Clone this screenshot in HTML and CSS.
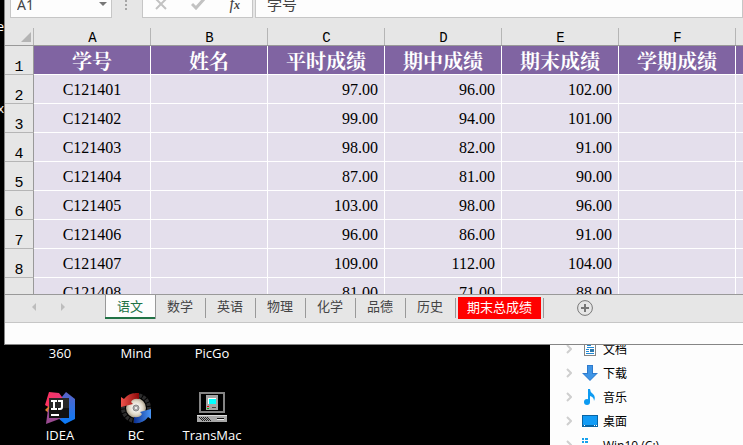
FILE: index.html
```html
<!DOCTYPE html>
<html lang="zh-CN">
<head>
<meta charset="utf-8">
<title>成绩表</title>
<link rel="stylesheet" href="styles.css">
</head>
<body>
<div class="upper">
  <div class="edge"><span>e</span><span>x</span></div>
  <main class="excel">
    <div class="formula-bar">
      <div class="box name-box">
        <input type="text" value="A1" aria-label="名称框">
        <button type="button" aria-label="展开"><svg width="8" height="4" viewBox="0 0 8 4"><path d="M0 0h8L4 4z" fill="#777"/></svg></button>
      </div>
      <svg class="dots" width="2" height="14" viewBox="0 0 2 14" fill="#a6a6a6"><path d="M0 0h2v2H0zM0 4h2v2H0zM0 8h2v2H0zM0 12h2v2H0z"/></svg>
      <div class="box tools">
        <button type="button" aria-label="取消"><svg width="12" height="12" viewBox="0 0 12 12"><path d="M1 1l10 10M11 1L1 11" stroke="#c2c2c2" stroke-width="2" fill="none"/></svg></button>
        <button type="button" aria-label="输入"><svg width="14" height="12" viewBox="0 0 14 12"><path d="M1 6l4 4 8-9" stroke="#c2c2c2" stroke-width="3" fill="none"/></svg></button>
        <button type="button" class="fx"><i>f</i><i class="sub">x</i></button>
      </div>
      <input class="box formula" type="text" value="学号" aria-label="编辑栏">
    </div>
    <div class="sheet">
      <table>
        <colgroup><col class="num"><col><col><col><col><col><col><col></colgroup>
        <thead>
          <tr><td class="corner"><svg width="10" height="10" viewBox="0 0 10 10"><path d="M10 0v10H0z" fill="#b4b4b4"/></svg></td><th>A</th><th>B</th><th>C</th><th>D</th><th>E</th><th>F</th><th></th></tr>
        </thead>
        <tbody>
          <tr class="titles"><th>1</th><td>学号</td><td>姓名</td><td>平时成绩</td><td>期中成绩</td><td>期末成绩</td><td>学期成绩</td><td></td></tr>
          <tr><th>2</th><td>C121401</td><td></td><td>97.00</td><td>96.00</td><td>102.00</td><td></td><td></td></tr>
          <tr><th>3</th><td>C121402</td><td></td><td>99.00</td><td>94.00</td><td>101.00</td><td></td><td></td></tr>
          <tr><th>4</th><td>C121403</td><td></td><td>98.00</td><td>82.00</td><td>91.00</td><td></td><td></td></tr>
          <tr><th>5</th><td>C121404</td><td></td><td>87.00</td><td>81.00</td><td>90.00</td><td></td><td></td></tr>
          <tr><th>6</th><td>C121405</td><td></td><td>103.00</td><td>98.00</td><td>96.00</td><td></td><td></td></tr>
          <tr><th>7</th><td>C121406</td><td></td><td>96.00</td><td>86.00</td><td>91.00</td><td></td><td></td></tr>
          <tr><th>8</th><td>C121407</td><td></td><td>109.00</td><td>112.00</td><td>104.00</td><td></td><td></td></tr>
          <tr><th></th><td>C121408</td><td></td><td>81.00</td><td>71.00</td><td>88.00</td><td></td><td></td></tr>
        </tbody>
      </table>
    </div>
    <nav class="tabs">
      <div class="arrows">
        <button type="button" aria-label="上一张"><svg width="4" height="8" viewBox="0 0 4 8"><path d="M4 0v8L0 4z" fill="#bdbdbd"/></svg></button>
        <button type="button" aria-label="下一张"><svg width="4" height="8" viewBox="0 0 4 8"><path d="M0 0v8l4-4z" fill="#bdbdbd"/></svg></button>
      </div>
      <button type="button" class="tab active">语文</button>
      <button type="button" class="tab">数学</button>
      <button type="button" class="tab">英语</button>
      <button type="button" class="tab">物理</button>
      <button type="button" class="tab">化学</button>
      <button type="button" class="tab">品德</button>
      <button type="button" class="tab">历史</button>
      <button type="button" class="tab total"><span>期末总成绩</span></button>
      <button type="button" class="add" aria-label="新工作表"><svg width="16" height="16" viewBox="0 0 16 16" fill="none" stroke="#777"><circle cx="8" cy="8" r="7.4"/><path d="M8 4v8M4 8h8" stroke-width="2"/></svg></button>
    </nav>
    <div class="status"></div>
  </main>
</div>
<div class="lower">
  <div class="desktop">
    <a class="shortcut" href="#">360</a>
    <a class="shortcut" href="#">Mind</a>
    <a class="shortcut" href="#">PicGo</a>
    <a class="shortcut" href="#">
      <svg width="32" height="32" viewBox="0 0 32 32">
        <defs>
          <linearGradient id="ij1" x1="0" y1="0" x2="0" y2="1"><stop offset="0" stop-color="#5b62c4"/><stop offset="1" stop-color="#087cfa"/></linearGradient>
          <linearGradient id="ij2" x1="0" y1="0" x2="1" y2="0"><stop offset="0" stop-color="#fe315d"/><stop offset="1" stop-color="#e33b7e"/></linearGradient>
        </defs>
        <path d="M17 6l5-6 9 7v20l-10 5-7-6z" fill="url(#ij1)"/>
        <path d="M1 13L5 0l10 1 6 8-10 10z" fill="url(#ij2)"/>
        <path d="M1 18l6-6v11z" fill="#e0822f"/>
        <path d="M4 17l14 9-16 6z" fill="#9a4b91"/>
        <path d="M5 6h20v20H5z" fill="#111"/>
        <path d="M5 6h20v10H5z" fill="#272727"/>
        <path d="M7 9h6M10 9v8M7 17h6M14 9h4v6q0 2-2 2h-2M7 23h8" stroke="#fff" stroke-width="2" fill="none"/>
      </svg>IDEA</a>
    <a class="shortcut" href="#">
      <svg width="32" height="32" viewBox="0 0 32 32">
        <defs>
          <radialGradient id="disc"><stop offset="0" stop-color="#8b8780"/><stop offset=".2" stop-color="#fff"/><stop offset=".7" stop-color="#ddd5c4"/><stop offset="1" stop-color="#a59b88"/></radialGradient>
          <linearGradient id="red" x1="0" y1="0" x2="1" y2="0"><stop offset="0" stop-color="#f0544c"/><stop offset="1" stop-color="#8c0808"/></linearGradient>
          <linearGradient id="blue" x1="0" y1="0" x2="1" y2="0"><stop offset="0" stop-color="#0b2f91"/><stop offset="1" stop-color="#4a96f5"/></linearGradient>
        </defs>
        <circle cx="16" cy="16" r="13" fill="none" stroke="#2c2c2c" stroke-width="4" stroke-dasharray="3 1"/>
        <circle cx="16" cy="16" r="10" fill="url(#disc)"/>
        <circle cx="16" cy="16" r="3" fill="#aaa" stroke="#888"/><circle cx="16" cy="16" r="1" fill="#fff"/>
        <path d="M1 5l3 2Q9 0 19 1v6q-6-1-8 3l2 2L1 15z" fill="url(#red)"/>
        <path d="M31 27l-3-2q-5 7-14 6v-6q6 1 8-3l-2-2 11-3z" fill="url(#blue)"/>
      </svg>BC</a>
    <a class="shortcut" href="#">
      <svg width="32" height="32" viewBox="0 0 32 32" shape-rendering="crispEdges">
        <path d="M4 1h24v19H4z" fill="#000" stroke="#858585" stroke-width="2"/>
        <path d="M10 3h12v15H10z" fill="#a4a4a4"/>
        <path d="M12 6h8v6h-8z" fill="#0ff"/><path d="M12 6h8v1h-8zM12 6h1v6h-1z" fill="#fff"/>
        <path d="M11 14h2v1h-2z" fill="#e00"/><path d="M11 16h2v1h-2z" fill="#0a0"/><path d="M16 15h4v1h-4z" fill="#444"/>
        <path d="M1 23h30v7H1z" fill="#a8a8a8"/><path d="M1 23h30v1H1z" fill="#ddd"/>
        <path d="M3 25h1v1H3zM5 25h1v1H5zM7 25h1v1H7zM9 25h1v1H9zM11 25h1v1h-1zM4 26h1v1H4zM6 26h1v1H6zM8 26h1v1H8zM10 26h1v1h-1zM12 26h1v1h-1zM5 27h1v1H5zM7 27h1v1H7zM9 27h1v1H9zM11 27h1v1h-1zM13 27h1v1h-1zM6 28h1v1H6zM8 28h1v1H8zM10 28h1v1h-1zM12 28h1v1h-1zM14 28h1v1h-1z" fill="#222"/>
        <path d="M21 26h7v1h-7z" fill="#111"/><path d="M21 27h7v1h-7z" fill="#eee"/>
      </svg>TransMac</a>
  </div>
  <ul class="explorer">
    <li><svg class="chev" width="6" height="10" viewBox="0 0 6 10"><path d="M1 1l4 4-4 4"/></svg><svg width="16" height="16" viewBox="0 0 16 16" shape-rendering="crispEdges"><path d="M2 1h12v14H2z" fill="#858585"/><path d="M3 2h10v12H3z" fill="#fff"/><path d="M5 4h4v1H5zM5 6h7v1H5zM4 8h3v1H4zM4 10h3v1H4zM4 12h8v1H4z" fill="#2189d5"/><path d="M8 8h4v3H8z" fill="#2c78ad"/></svg>文档</li>
    <li><svg class="chev" width="6" height="10" viewBox="0 0 6 10"><path d="M1 1l4 4-4 4"/></svg><svg width="16" height="16" viewBox="0 0 16 16"><path d="M5 0h6v8h5l-8 8-8-8h5z" fill="#2f7bcd"/><path d="M6 1h4v8h4l-6 6-6-6h4z" fill="#3f95e6"/></svg>下载</li>
    <li><svg class="chev" width="6" height="10" viewBox="0 0 6 10"><path d="M1 1l4 4-4 4"/></svg><svg width="16" height="16" viewBox="0 0 16 16" fill="#0d9bf2"><ellipse cx="5" cy="13" rx="3" ry="3"/><path d="M6 0h2q0 3 3 5 3 3 1 7 0-4-4-5v6H6z"/></svg>音乐</li>
    <li><svg class="chev" width="6" height="10" viewBox="0 0 6 10"><path d="M1 1l4 4-4 4"/></svg><svg width="16" height="16" viewBox="0 0 16 16"><path d="M0 2h16v12H0z" fill="#0865a5"/><path d="M1 3h14v9H1z" fill="#129cf6"/><path d="M2 12h1v1H2zM12 12h1v1h-1zM14 12h1v1h-1z" fill="#fff"/></svg>桌面</li>
    <li><svg class="chev" width="6" height="10" viewBox="0 0 6 10"><path d="M1 1l4 4-4 4"/></svg><svg width="16" height="16" viewBox="0 0 16 16"><path d="M0 1h2v2H0zM3 1h3v2H3zM0 4h2v2H0zM3 4h3v2H3z" fill="#17a1ed"/><path d="M0 8h16v5H0z" fill="#999"/></svg>Win10 (C:)</li>
  </ul>
</div>
</body>
</html>
```

FILE: styles.css
```css
* { box-sizing: border-box; }

body {
  margin: 0;
  height: 100vh;
  display: flex;
  flex-direction: column;
  overflow: hidden;
  background: #000;
  font-family: "Open Sans", "Noto Sans CJK SC", sans-serif;
  font-size: 13px;
}

button, input { font: inherit; margin: 0; padding: 0; border: 0; background: none; color: inherit; }
svg { display: block; flex: none; }

.upper { flex: 1; min-height: 0; display: flex; }

.edge {
  width: 4px;
  flex: none;
  overflow: hidden;
  display: flex;
  flex-direction: column;
  align-items: flex-end;
  gap: 62px;
  padding-top: 16px;
  color: #fff;
  line-height: 20px;
}

.excel {
  flex: 1;
  min-width: 0;
  display: flex;
  flex-direction: column;
  background: #e6e6e6;
  border-left: 1px solid #868686;
  border-bottom: 1px solid #868686;
}

/* Formula bar: its upper part lies above the window */
.formula-bar {
  flex: none;
  height: 18px;
  overflow: hidden;
  display: flex;
  align-items: flex-end;
  padding-left: 5px;
}
.box { height: 28px; background: #fdfdfd; border: 1px solid #c6c6c6; flex: none; }
.name-box { width: 102px; display: flex; align-items: center; padding: 0 6px; color: #444; }
.name-box input { width: 82px; font-family: "Noto Sans", sans-serif; font-size: 14px; }
.dots { margin: 0 15px 8px 13px; }
.tools { width: 111px; display: flex; align-items: center; justify-content: space-between; padding: 0 12px; color: #444; }
.tools svg { margin-bottom: 1px; }
.fx { font-family: "Liberation Serif", serif; font-size: 16px; line-height: 18px; }
.fx .sub { font-size: 12px; font-weight: bold; }
.formula { flex: 1; min-width: 0; margin-left: 2px; padding: 0 0 2px 11px; font-size: 15px; color: #444; }

.sheet { flex: 1; min-height: 0; overflow: hidden; border-bottom: 1px solid #999; }
table { table-layout: fixed; width: 848px; border-collapse: separate; border-spacing: 0; }
col { width: 117px; }
.num { width: 29px; }
tr { height: 29px; }
th, td { padding: 0; }
thead tr { height: 28px; }
thead th, .corner {
  border-bottom: 1px solid #999;
  background: linear-gradient(#b5b5b5, #b5b5b5) right bottom / 1px 17px no-repeat;
  font: 14px/14px "Liberation Mono", monospace;
  vertical-align: bottom;
}
.corner { padding: 0 3px 3px 0; }
.corner svg { margin-left: auto; }
tbody th {
  border-right: 1px solid #999;
  border-bottom: 1px solid #b5b5b5;
  font: 15px/12px "Liberation Mono", monospace;
  vertical-align: bottom;
}
tbody td {
  background: #e4dfec;
  border-right: 1px solid #fff;
  border-bottom: 1px solid #fff;
  font: 16px/20px "Liberation Serif", serif;
  text-align: right;
  padding: 2px 6px 0 0;
}
tbody td:nth-child(2) { text-align: center; padding-right: 0; }
.titles td {
  background: #8064a2;
  color: #fff;
  font: bold 20px/24px "Noto Serif CJK SC", "Noto Sans CJK SC", serif;
  text-align: center;
  padding-right: 0;
}

.tabs { flex: none; height: 28px; display: flex; align-items: flex-start; border-bottom: 1px solid #c6c6c6; color: #444; }
.arrows { width: 100px; height: 24px; padding-left: 27px; display: flex; align-items: center; gap: 25px; }
.tab { position: relative; height: 24px; width: 50px; padding-bottom: 2px; line-height: 20px; text-align: center; white-space: nowrap; }
.tab::after { content: ""; position: absolute; right: -1px; top: 3px; height: 20px; border-right: 1px solid #999; }
.tab.active { background: #fdfdfd; color: #217346; padding: 0; border-bottom: 2px solid #217346; box-shadow: inset 1px 0 #999, 1px 0 #999; }
.tab.active::after { display: none; }
.tab.total { width: 88px; padding: 1px 2px 0 3px; color: #fff; }
.total span { display: block; height: 22px; padding-bottom: 2px; line-height: 20px; background: #f00; }
.add { margin: 5px 0 0 34px; }
.status { flex: none; height: 21px; background: #fdfdfd; }

.lower { flex: none; height: 100px; display: flex; justify-content: space-between; overflow: hidden; }
.desktop { display: grid; grid-template-columns: repeat(3, 76px); grid-template-rows: 17px 82px; padding-left: 22px; }
.shortcut {
  display: flex;
  flex-direction: column;
  justify-content: flex-end;
  align-items: center;
  gap: 2px;
  color: #fff;
  line-height: 18px;
  text-decoration: none;
}

.explorer { width: 193px; margin: 0; padding: 0 0 0 16px; list-style: none; background: #fdfdfd; font-size: 12px; }
.explorer li { height: 24px; display: flex; align-items: center; gap: 5px; white-space: nowrap; }
.explorer li:first-child { margin-top: -8px; }
.chev { margin-right: 5px; fill: none; stroke: #cfcfcf; stroke-width: 2px; }
```
